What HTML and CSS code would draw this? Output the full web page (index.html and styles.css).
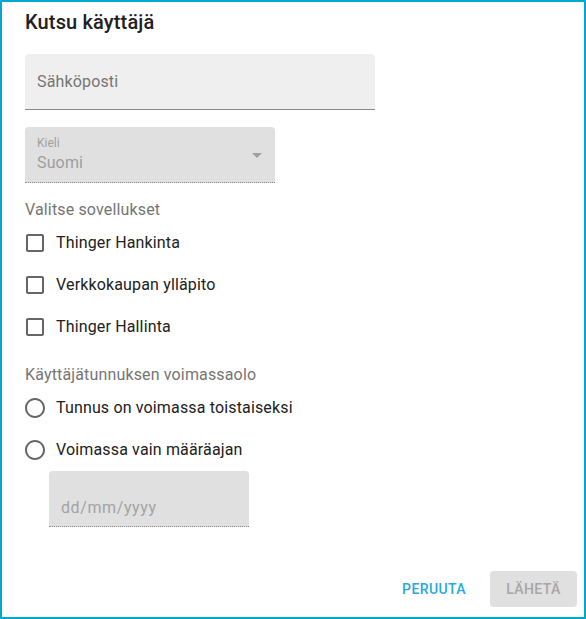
FILE: index.html
```html
<!DOCTYPE html>
<html lang="fi">
<head>
<meta charset="utf-8">
<title>Kutsu käyttäjä</title>
<link rel="stylesheet" href="styles.css">
</head>
<body>
<div class="dialog">
  <h2 class="title">Kutsu käyttäjä</h2>

  <div class="field email">
    <span class="placeholder">Sähköposti</span>
  </div>

  <div class="field select">
    <span class="select-label">Kieli</span>
    <span class="select-value">Suomi</span>
    <span class="arrow"></span>
  </div>

  <div class="section-label apps">Valitse sovellukset</div>
  <div class="option">
    <svg class="icon" viewBox="0 0 24 24" width="24" height="24"><path d="M19 5v14H5V5h14m0-2H5c-1.11 0-2 .9-2 2v14c0 1.1.89 2 2 2h14c1.1 0 2-.9 2-2V5c0-1.1-.9-2-2-2z"/></svg>
    <span class="option-text">Thinger Hankinta</span>
  </div>
  <div class="option">
    <svg class="icon" viewBox="0 0 24 24" width="24" height="24"><path d="M19 5v14H5V5h14m0-2H5c-1.11 0-2 .9-2 2v14c0 1.1.89 2 2 2h14c1.1 0 2-.9 2-2V5c0-1.1-.9-2-2-2z"/></svg>
    <span class="option-text">Verkkokaupan ylläpito</span>
  </div>
  <div class="option">
    <svg class="icon" viewBox="0 0 24 24" width="24" height="24"><path d="M19 5v14H5V5h14m0-2H5c-1.11 0-2 .9-2 2v14c0 1.1.89 2 2 2h14c1.1 0 2-.9 2-2V5c0-1.1-.9-2-2-2z"/></svg>
    <span class="option-text">Thinger Hallinta</span>
  </div>

  <div class="section-label validity">Käyttäjätunnuksen voimassaolo</div>
  <div class="option">
    <svg class="icon" viewBox="0 0 24 24" width="24" height="24"><path d="M12 2C6.480 2 2 6.48 2 12s4.48 10 10 10 10-4.48 10-10S17.52 2 12 2zm0 18c-4.42 0-8-3.58-8-8s3.58-8 8-8 8 3.58 8 8-3.58 8-8 8z"/></svg>
    <span class="option-text">Tunnus on voimassa toistaiseksi</span>
  </div>
  <div class="option">
    <svg class="icon" viewBox="0 0 24 24" width="24" height="24"><path d="M12 2C6.48 2 2 6.48 2 12s4.48 10 10 10 10-4.48 10-10S17.52 2 12 2zm0 18c-4.42 0-8-3.58-8-8s3.58-8 8-8 8 3.58 8 8-3.58 8-8 8z"/></svg>
    <span class="option-text">Voimassa vain määräajan</span>
  </div>

  <div class="field date">
    <span class="date-placeholder">dd/mm/yyyy</span>
  </div>

  <div class="actions">
    <button class="btn btn-text">Peruuta</button>
    <button class="btn btn-disabled" disabled>Lähetä</button>
  </div>
</div>
</body>
</html>
```

FILE: styles.css
```css
html, body {
  margin: 0;
  padding: 0;
  background: #ffffff;
}

body {
  font-family: Roboto, "Liberation Sans", sans-serif;
}

.dialog {
  box-sizing: border-box;
  width: 586px;
  height: 619px;
  border: 2px solid #00a8cc;
  padding: 8px 7px 10px 23px;
  display: flex;
  flex-direction: column;
  align-items: flex-start;
}

.title {
  margin: 0;
  font-size: 20px;
  line-height: 24px;
  font-weight: 500;
  letter-spacing: 0.15px;
  color: #212121;
}

.field {
  box-sizing: border-box;
  height: 56px;
  border-radius: 4px 4px 0 0;
  padding: 0 12px;
  position: relative;
}

.email {
  margin-top: 20px;
  width: 350px;
  background: #efefef;
  border-bottom: 1px solid #8a8a8a;
  display: flex;
  align-items: center;
}

.placeholder {
  font-size: 16px;
  line-height: 24px;
  letter-spacing: 0.15px;
  color: #757575;
}

.select {
  margin-top: 17px;
  width: 250px;
  background: #e0e0e0;
  border-bottom: 1px dotted #8a8a8a;
  padding-top: 8px;
  display: flex;
  flex-direction: column;
}

.select-label {
  font-size: 12px;
  line-height: 16px;
  color: #a0a0a0;
}

.select-value {
  font-size: 16px;
  line-height: 24px;
  letter-spacing: 0.15px;
  color: #9e9e9e;
}

.arrow {
  position: absolute;
  right: 13px;
  top: 26px;
  width: 0;
  height: 0;
  border-left: 5px solid transparent;
  border-right: 5px solid transparent;
  border-top: 5px solid #a0a0a0;
}

.section-label {
  font-size: 16px;
  line-height: 24px;
  letter-spacing: 0.15px;
  color: #757575;
}

.apps {
  margin-top: 15px;
}

.validity {
  margin-top: 15px;
}

.option {
  height: 42px;
  display: flex;
  align-items: center;
}

.icon {
  margin-left: -2px;
  fill: #666666;
  flex: none;
}

.option-text {
  margin-left: 9px;
  font-size: 16px;
  line-height: 24px;
  letter-spacing: 0.15px;
  color: #212121;
}

.date {
  margin-left: 24px;
  width: 200px;
  background: #e0e0e0;
  border-bottom: 1px dotted #8a8a8a;
  padding-top: 25px;
}

.date-placeholder {
  display: block;
  font-size: 16px;
  line-height: 24px;
  color: #a3a3a3;
  letter-spacing: 0.6px;
}

.actions {
  margin-top: auto;
  align-self: stretch;
  display: flex;
  justify-content: flex-end;
  align-items: center;
  gap: 16px;
}

.btn {
  font-family: Roboto, "Liberation Sans", sans-serif;
  font-size: 14px;
  font-weight: 500;
  letter-spacing: 0.4px;
  text-transform: uppercase;
  height: 36px;
  border: none;
  border-radius: 4px;
  background: transparent;
  padding: 0 8px;
  line-height: 36px;
}

.btn-text {
  color: #29a8e0;
}

.btn-disabled {
  background: #e0e0e0;
  color: #a6a6a6;
  padding: 0 16px;
  width: 87px;
}
```
